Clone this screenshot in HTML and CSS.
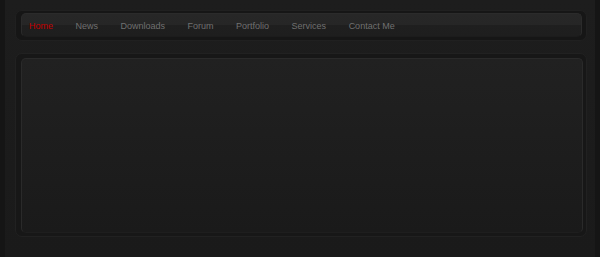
FILE: index.html
```html
<!DOCTYPE html>
<html lang="en">
<head>
  <meta charset="UTF-8">
  <title>Dark Layout</title>
  <link rel="stylesheet" href="styles.css">
</head>
<body>

<div class="wrapper">
  <div class="nav-frame">
    <ul class="nav">
      <li><a href="#" class="active">Home</a></li>
      <li><a href="#">News</a></li>
      <li><a href="#">Downloads</a></li>
      <li><a href="#">Forum</a></li>
      <li><a href="#">Portfolio</a></li>
      <li><a href="#">Services</a></li>
      <li><a href="#">Contact Me</a></li>
    </ul>
  </div>

  <div class="content-frame">
    <div class="content"></div>
  </div>
</div>

</body>
</html>
```

FILE: styles.css
```css
body {
  margin: 0;
  font-family: 'Liberation Sans', Arial, sans-serif;
  background-color: #151515;
}

.wrapper {
  width: 590px;
  height: 257px;
  margin: 0 0 0 5px;
  padding: 10px 0 0 10px;
  box-sizing: border-box;
  background: linear-gradient(#1d1d1d, #1a1a1a);
}

.nav-frame {
  width: 572px;
  box-sizing: border-box;
  padding: 2px 4px 3px 5px;
  background-color: #161616;
  border: 1px solid #202020;
  border-radius: 7px;
}

.nav {
  list-style: none;
  margin: 0;
  padding: 1px 0 0 7px;
  height: 21px;
  display: flex;
  gap: 22.5px;
  align-items: center;
  border-radius: 5px;
  border: 1px solid #2b2b2b;
  border-bottom-color: #1c1c1c;
  background: linear-gradient(#272727 0, #262626 50%, #1f1f1f 50%, #1e1e1e 100%);
}

.nav a {
  display: block;
  font-size: 9px;
  color: #707070;
  text-decoration: none;
  line-height: 12px;
}

.nav a.active {
  color: #c30000;
}

.content-frame {
  width: 572px;
  margin-top: 12px;
  box-sizing: border-box;
  padding: 4px 3px 3px 5px;
  background-color: #171717;
  border: 1px solid #212121;
  border-radius: 7px;
}

.content {
  height: 173px;
  border-radius: 5px;
  border: 1px solid #2a2a2a;
  border-bottom-color: #1e1e1e;
  background: linear-gradient(#212121, #1a1a1a);
}
```
